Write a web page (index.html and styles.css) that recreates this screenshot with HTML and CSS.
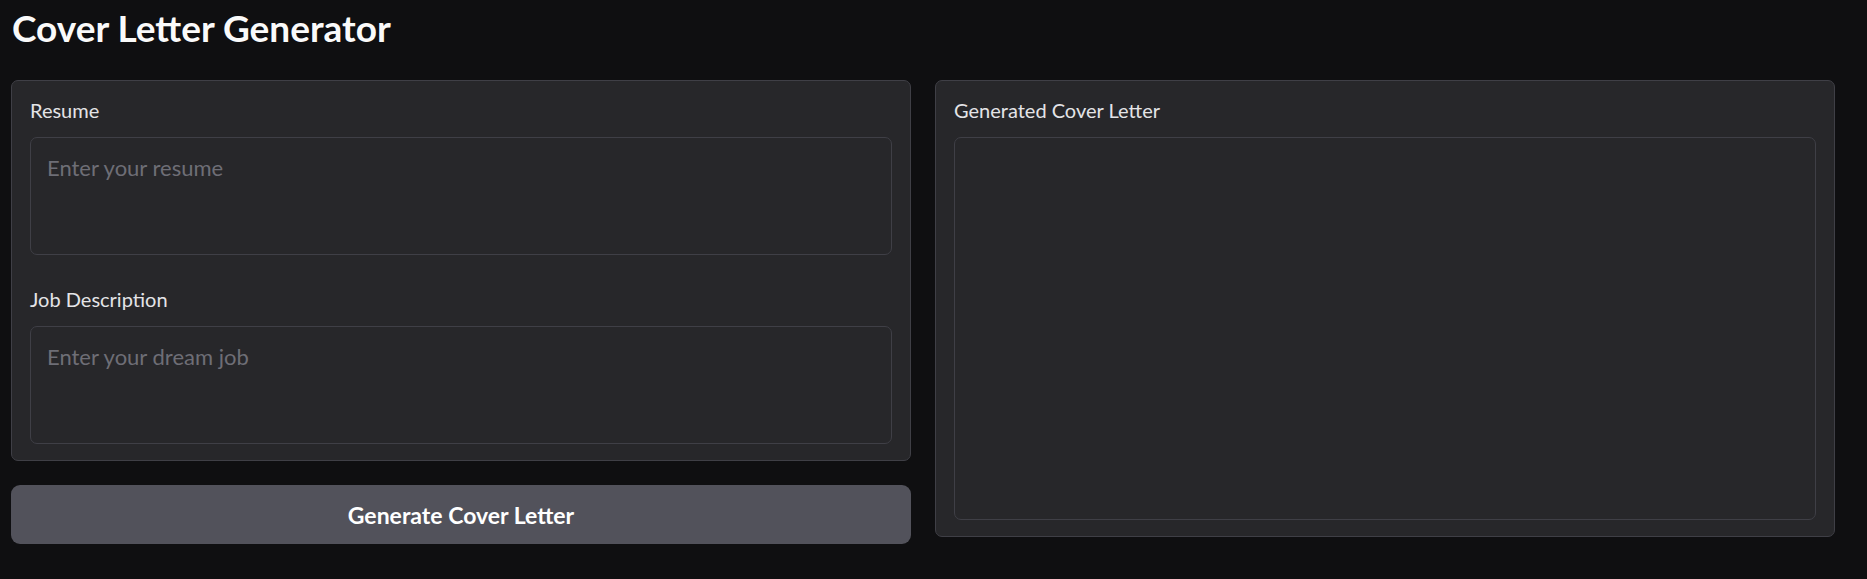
FILE: index.html
```html
<!DOCTYPE html>
<html lang="en">
<head>
<meta charset="utf-8">
<title>Cover Letter Generator</title>
<link rel="stylesheet" href="styles.css">
</head>
<body>
  <main class="app">
    <h1 class="title">Cover Letter Generator</h1>
    <div class="columns">
      <div class="col col-left">
        <section class="panel">
          <label class="field">
            <span class="label">Resume</span>
            <textarea class="input input-short" placeholder="Enter your resume"></textarea>
          </label>
          <label class="field field-next">
            <span class="label">Job Description</span>
            <textarea class="input input-short" placeholder="Enter your dream job"></textarea>
          </label>
        </section>
        <button class="btn" type="button">Generate Cover Letter</button>
      </div>
      <div class="col col-right">
        <section class="panel">
          <label class="field">
            <span class="label">Generated Cover Letter</span>
            <textarea class="input input-tall"></textarea>
          </label>
        </section>
      </div>
    </div>
  </main>
</body>
</html>
```

FILE: styles.css
```css
* { box-sizing: border-box; }

html, body {
  margin: 0;
  padding: 0;
  background: #0f0f11;
}

body {
  font-family: Lato, "Noto Sans", sans-serif;
  color: #f4f4f5;
}

.app {
  padding: 0 32px 0 11px;
}

.title {
  margin: 0;
  padding-top: 4px;
  height: 80px;
  font-size: 37px;
  line-height: 48px;
  font-weight: 700;
  color: #fafafa;
  padding-left: 1px;
}

.columns {
  display: flex;
  gap: 24px;
  align-items: flex-start;
}

.col {
  flex: 1 1 0;
  display: flex;
  flex-direction: column;
  gap: 24px;
}

.panel {
  background: #27272a;
  border: 1px solid #3f3f46;
  border-radius: 7px;
  padding: 15px 18px 16px;
  display: flex;
  flex-direction: column;
}

.field {
  display: flex;
  flex-direction: column;
}

.field-next {
  margin-top: 30px;
}

.label {
  display: block;
  font-size: 20px;
  line-height: 28px;
  height: 28px;
  margin-bottom: 13px;
  color: #e4e4e7;
}

.input {
  display: block;
  width: 100%;
  resize: none;
  background: #27272a;
  border: 1px solid #3f3f46;
  border-radius: 7px;
  padding: 14px 16px 12px;
  font-family: Lato, "Noto Sans", sans-serif;
  font-size: 22px;
  line-height: 32px;
  color: #f4f4f5;
  outline: none;
}

.input::placeholder {
  color: #6e6e76;
}

.input-short { height: 118px; }
.input-tall { height: 383px; }

.btn {
  height: 59px;
  width: 100%;
  border: none;
  border-radius: 9px;
  background: #52525b;
  color: #ffffff;
  font-family: Lato, "Noto Sans", sans-serif;
  font-size: 23px;
  font-weight: 700;
}
```
